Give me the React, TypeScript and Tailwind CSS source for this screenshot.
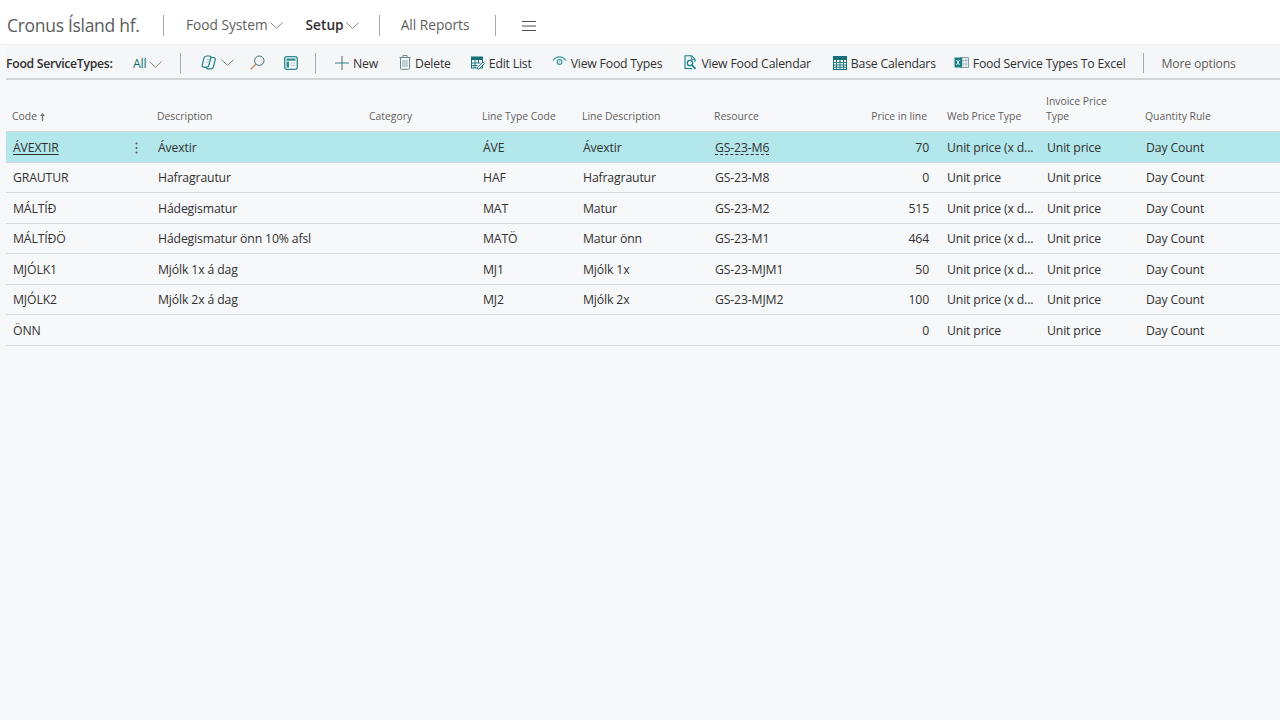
import type { ReactNode } from "react"

const rows = [
  { code: "ÁVEXTIR", desc: "Ávextir", line: "ÁVE", lineDesc: "Ávextir", res: "GS-23-M6", price: "70", web: "Unit price (x d...", inv: "Unit price" },
  { code: "GRAUTUR", desc: "Hafragrautur", line: "HAF", lineDesc: "Hafragrautur", res: "GS-23-M8", price: "0", web: "Unit price", inv: "Unit price" },
  { code: "MÁLTÍÐ", desc: "Hádegismatur", line: "MAT", lineDesc: "Matur", res: "GS-23-M2", price: "515", web: "Unit price (x d...", inv: "Unit price" },
  { code: "MÁLTÍÐÖ", desc: "Hádegismatur önn 10% afsl", line: "MATÖ", lineDesc: "Matur önn", res: "GS-23-M1", price: "464", web: "Unit price (x d...", inv: "Unit price" },
  { code: "MJÓLK1", desc: "Mjólk 1x á dag", line: "MJ1", lineDesc: "Mjólk 1x", res: "GS-23-MJM1", price: "50", web: "Unit price (x d...", inv: "Unit price" },
  { code: "MJÓLK2", desc: "Mjólk 2x á dag", line: "MJ2", lineDesc: "Mjólk 2x", res: "GS-23-MJM2", price: "100", web: "Unit price (x d...", inv: "Unit price" },
  { code: "ÖNN", desc: "", line: "", lineDesc: "", res: "", price: "0", web: "Unit price", inv: "Unit price" },
]

const gridCols = "grid grid-cols-[145px_212px_113px_100px_132px_161px_66px_105px_99px_1fr]"

function Divider({ className = "h-[20px]" }: { className?: string }) {
  return <div className={`w-px bg-[#a8a8a8] ${className}`} />
}

function Chevron({ className = "" }: { className?: string }) {
  return (
    <svg className={className} width="13" height="7" viewBox="0 0 13 7" fill="none" stroke="#7a7a7a" strokeWidth="0.900">
      <path d="M0.500 0.700l6 5.600 6-5.600" />
    </svg>
  )
}

function Action({ icon, label, className = "" }: { icon: ReactNode; label: string; className?: string }) {
  return (
    <div className={`flex items-center gap-[4px] whitespace-nowrap ${className}`}>
      <div className="-mt-[3px] flex">{icon}</div>
      <span>{label}</span>
    </div>
  )
}

function CopilotIcon() {
  return (
    <svg width="16" height="15" viewBox="0 0 16 15" fill="none" stroke="#1f7f86" strokeWidth="1.200">
      <path d="M5.500 1h3c1.200 0 1.600.9 1.300 1.800L7.800 10.500c-.3 1.100-1 1.700-2 1.700H2.800c-1.300 0-1.900-1-1.600-2.100l1.700-6.900C3.200 2 4.200 1 5.500 1Z" />
      <path d="M9 2.500h3.500c1.300 0 2 1 1.700 2.100l-1.700 7c-.3 1.300-1.200 2.200-2.400 2.200H7c-1 0-1.700-.6-1.900-1.500" />
      <path d="M5.500 4.500h3.800M4.800 7h3.800" stroke="#7fb9bd" strokeWidth="0.800" />
    </svg>
  )
}

function SearchIcon() {
  return (
    <svg width="15" height="15" viewBox="0 0 15 15" fill="none">
      <circle cx="9.300" cy="5.700" r="4.700" stroke="#3d6f78" strokeWidth="1" />
      <path d="M5.800 9.200L0.800 14.200" stroke="#c68a4e" strokeWidth="1.300" />
    </svg>
  )
}

function PageIcon() {
  return (
    <svg width="14" height="14" viewBox="0 0 14 14" fill="none">
      <rect x="0.700" y="0.700" width="12.600" height="12.600" rx="2" stroke="#2b8a91" strokeWidth="1.300" />
      <rect x="2.500" y="2.500" width="9" height="2.200" fill="#2b8a91" />
      <rect x="2.500" y="5.600" width="2.500" height="5.900" fill="#2b8a91" />
      <path d="M7 7h4.500M7 9.500h4.500" stroke="#9cc8cb" strokeWidth="1" strokeDasharray="1.500 1" />
    </svg>
  )
}

function PlusIcon() {
  return (
    <svg width="14" height="14" viewBox="0 0 14 14" fill="none" stroke="#2b8a91" strokeWidth="1">
      <path d="M0 7h14" />
      <path d="M7 0v14" stroke="#5a6a70" />
    </svg>
  )
}

function TrashIcon() {
  return (
    <svg width="12" height="15" viewBox="0 0 12 15" fill="none" stroke="#6f8a8c" strokeWidth="1">
      <path d="M0.500 2.500h11M4 2.500V.5h4v2M1.500 2.500V13.500c0 .5.300.8.800.8h7.400c.5 0 .8-.3.800-.8V2.500" />
      <path d="M4 5v7M6 5v7M8 5v7" stroke="#8fb0b2" />
    </svg>
  )
}

function EditListIcon() {
  return (
    <svg width="14" height="14" viewBox="0 0 14 14" fill="none">
      <rect x="0.500" y="1" width="11" height="11" fill="none" stroke="#14717a" />
      <rect x="0.500" y="1" width="11" height="3" fill="#14717a" />
      <path d="M0.500 7h9M0.500 9.500h6M4 4v8M7.500 4v3" stroke="#14717a" strokeWidth="0.900" />
      <path d="M6.500 11.500l5.500-5.500 1.500 1.500-5.500 5.500H6.500Z" fill="#f4f6f8" stroke="#14717a" strokeWidth="0.900" />
    </svg>
  )
}

function EyeIcon() {
  return (
    <svg className="-mt-[3px]" width="15" height="11" viewBox="0 0 15 11" fill="none" stroke="#3a9aa1">
      <path d="M1 4.500C3 1.800 5.200.8 7.500.8s4.500 1 6.500 3.700" strokeWidth="1.200" />
      <circle cx="7.500" cy="6" r="2.400" strokeWidth="1.200" />
      <circle cx="7.500" cy="6" r="0.600" fill="#3a9aa1" stroke="none" />
    </svg>
  )
}

function DocSearchIcon() {
  return (
    <svg width="13" height="15" viewBox="0 0 13 15" fill="none" stroke="#14808a" strokeWidth="1.100">
      <path d="M8 13.500H1V.7h6.500l3.500 3.500V7" />
      <path d="M7.300.7v3.600H11" strokeWidth="0.900" />
      <circle cx="6" cy="8" r="2.700" strokeWidth="1.300" />
      <path d="M8 10l3.500 3.800" strokeWidth="1.700" />
    </svg>
  )
}

function CalendarIcon() {
  return (
    <svg width="14" height="14" viewBox="0 0 14 14" fill="none">
      <rect x="0.500" y="0.500" width="13" height="13" stroke="#14717a" />
      <rect x="0.500" y="0.500" width="13" height="3.500" fill="#14717a" />
      <path d="M0.500 6.500h13M0.500 9h13M0.500 11.300h13M3.500 4v10M7 4v10M10.500 4v10" stroke="#14717a" strokeWidth="0.900" />
    </svg>
  )
}

function ExcelIcon() {
  return (
    <svg width="15" height="13" viewBox="0 0 15 13" fill="none">
      <path d="M6 1.500h8.500v10H6" stroke="#7f9ea1" />
      <path d="M9 1.500v10M12 1.500v10M6 4.500h8.500M6 8h8.500" stroke="#9db5b7" strokeWidth="0.800" />
      <rect x="0.500" y="1.500" width="7.500" height="10" fill="#1f7f86" />
      <path d="M2.500 4l3 5M5.500 4l-3 5" stroke="#fff" strokeWidth="0.900" />
    </svg>
  )
}

function Header({ children, className = "px-[6px]" }: { children: ReactNode; className?: string }) {
  return <div className={`whitespace-nowrap text-[10.400px] leading-[15px] text-[#615f5d] ${className}`}>{children}</div>
}

export default function App() {
  return (
    <div className="min-h-[720px] bg-[#f7f8fa] font-['Open_Sans','Noto_Sans',sans-serif] text-[#212121]">
      <div className="flex h-[45px] items-center border-b border-[#eceef0] bg-white pl-[7px] pt-[7px]">
        <span className="w-[156px] text-[17.500px] tracking-[-0.300px] text-[#5c5c5c]">Cronus Ísland hf.</span>
        <Divider className="h-[21px]" />
        <div className="ml-[22px] flex items-center text-[13.700px] text-[#605e5c]">
          Food System
          <Chevron className="ml-[2px]" />
        </div>
        <div className="ml-[23px] flex items-center text-[13.700px] font-semibold text-[#323130]">
          Setup
          <Chevron className="ml-[2px]" />
        </div>
        <Divider className="ml-[20px] h-[21px]" />
        <span className="ml-[21px] text-[13.700px] text-[#605e5c]">All Reports</span>
        <Divider className="ml-[25px] h-[21px]" />
        <svg className="ml-[25px]" width="16" height="12" viewBox="0 0 16 12" stroke="#505050" strokeWidth="1">
          <path d="M1 1.500h14M1 6h14M1 10.500h14" />
        </svg>
      </div>

      <div className="ml-[6px] flex h-[35px] items-center border-b-2 border-[#d4d5d6] bg-[#f4f6f8] pt-[5px] text-[12.250px] tracking-[-0.200px] text-[#323130]">
        <span className="w-[127px] font-semibold tracking-[-0.300px]">Food ServiceTypes:</span>
        <div className="flex w-[47px] items-center text-[#0f6f78]">
          All
          <Chevron className="ml-[3px]" />
        </div>
        <Divider className="-mt-[3px] h-[20px]" />
        <div className="-mt-[3px] ml-[20px] flex w-[36px] items-center">
          <CopilotIcon />
          <Chevron className="ml-[4px]" />
        </div>
        <div className="-mt-[3px] ml-[13px]"><SearchIcon /></div>
        <div className="-mt-[3px] ml-[19px]"><PageIcon /></div>
        <Divider className="-mt-[3px] ml-[17px] h-[20px]" />
        <Action className="ml-[19px]" icon={<PlusIcon />} label="New" />
        <Action className="ml-[21px]" icon={<TrashIcon />} label="Delete" />
        <Action className="ml-[20px]" icon={<EditListIcon />} label="Edit List" />
        <Action className="ml-[20px]" icon={<EyeIcon />} label="View Food Types" />
        <Action className="ml-[22px]" icon={<DocSearchIcon />} label="View Food Calendar" />
        <Action className="ml-[22px]" icon={<CalendarIcon />} label="Base Calendars" />
        <Action className="ml-[18px]" icon={<ExcelIcon />} label="Food Service Types To Excel" />
        <Divider className="-mt-[3px] ml-[17px] h-[20px]" />
        <span className="ml-[18px] text-[#605e5c]">More options</span>
      </div>

      <div className="ml-[6px]">
        <div className={`${gridCols} h-[52px] items-end border-b border-[#d8d8d8] pb-[7px]`}>
          <Header className="flex items-center gap-[3px] px-[6px]">
            Code
            <svg width="5" height="8" viewBox="0 0 5 8" fill="#777"><path d="M2.500 0L5 3H3.200v5H1.800V3H0Z" /></svg>
          </Header>
          <Header>Description</Header>
          <Header>Category</Header>
          <Header>Line Type Code</Header>
          <Header>Line Description</Header>
          <Header>Resource</Header>
          <Header className="pr-[8px] text-right">Price in line</Header>
          <Header className="pl-[12px] pr-[6px]">Web Price Type</Header>
          <Header>Invoice Price<br />Type</Header>
          <Header>Quantity Rule</Header>
        </div>
        {rows.map((r, i) => (
          <div
            key={r.code}
            className={`${gridCols} h-[30.570px] items-center border-b border-[#d8d8d8] pt-[2px] text-[12.250px] tracking-[-0.150px] text-[#323130] ${i === 0 ? "bg-[#b2e8eb]" : ""}`}
          >
            <div className="flex items-center justify-between pl-[7px] pr-[13px]">
              <span className={i === 0 ? "underline underline-offset-2" : ""}>{r.code}</span>
              {i === 0 && (
                <svg width="3" height="12" viewBox="0 0 3 12" fill="#555">
                  <circle cx="1.500" cy="1.500" r="1" />
                  <circle cx="1.500" cy="6" r="1" />
                  <circle cx="1.500" cy="10.500" r="1" />
                </svg>
              )}
            </div>
            <div className="pl-[7px]">{r.desc}</div>
            <div />
            <div className="pl-[7px]">{r.line}</div>
            <div className="pl-[7px]">{r.lineDesc}</div>
            <div className="pl-[7px]">
              <span className={i === 0 ? "underline decoration-dashed underline-offset-2" : ""}>{r.res}</span>
            </div>
            <div className="pr-[6px] text-right">{r.price}</div>
            <div className="whitespace-nowrap pl-[12px]">{r.web}</div>
            <div className="pl-[7px]">{r.inv}</div>
            <div className="pl-[7px]">Day Count</div>
          </div>
        ))}
      </div>
    </div>
  )
}
